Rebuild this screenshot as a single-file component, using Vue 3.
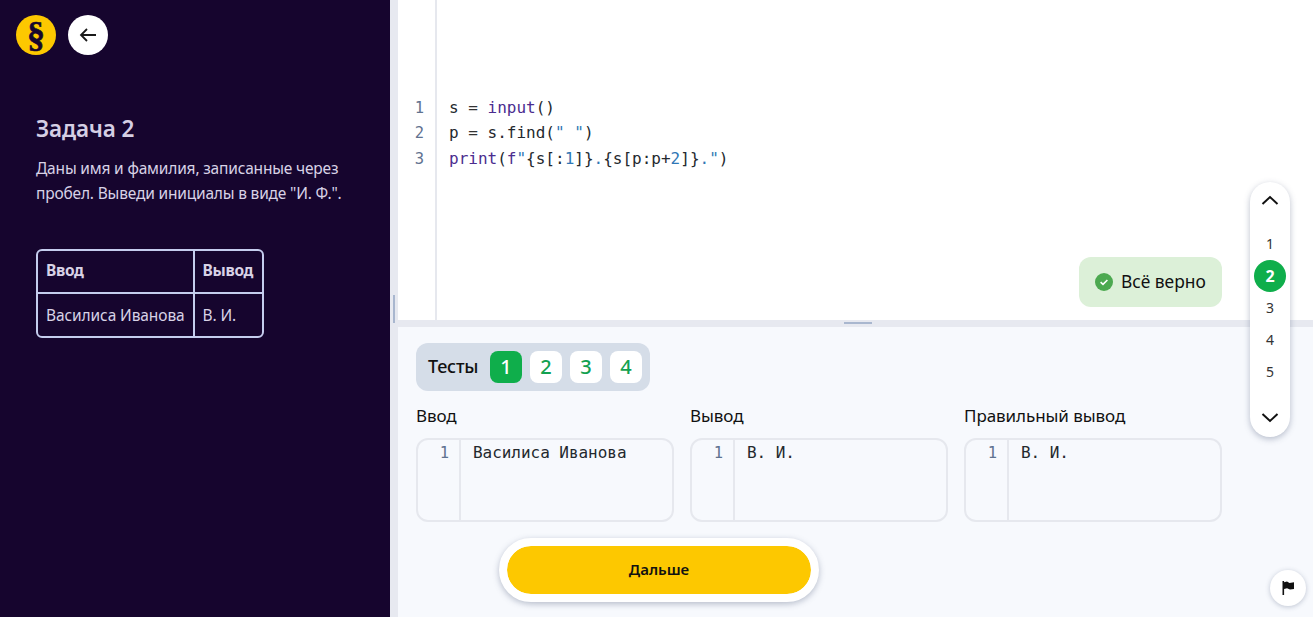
<script setup>
const inputs = [
  { title: 'Ввод', text: 'Василиса Иванова' },
  { title: 'Вывод', text: 'В. И.' },
  { title: 'Правильный вывод', text: 'В. И.' },
]
</script>

<template>
  <div class="page">
    <aside class="side">
      <div class="top">
        <div class="logo"><span>§</span></div>
        <button class="back" aria-label="Назад">
          <svg width="18" height="18" viewBox="0 0 18 18" fill="none" stroke="#1a1a1a" stroke-width="1.8"><path d="M17 9H2M8 3 2 9l6 6"/></svg>
        </button>
      </div>
      <h1>Задача 2</h1>
      <p>Даны имя и фамилия, записанные через пробел. Выведи инициалы в виде "И. Ф.".</p>
      <table>
        <thead><tr><th>Ввод</th><th>Вывод</th></tr></thead>
        <tbody><tr><td>Василиса Иванова</td><td>В. И.</td></tr></tbody>
      </table>
    </aside>

    <div class="vsplit"><i></i></div>

    <main class="main">
      <section class="editor">
        <div class="gutter"><div>1</div><div>2</div><div>3</div></div>
        <div class="code">
          <div class="line">s <b>=</b> <em>input</em>()</div>
          <div class="line">p <b>=</b> s.find(<u>" "</u>)</div>
          <div class="line"><em>print</em>(<em>f</em><u>"</u>{s[:<s>1</s>]}<u>.</u>{s[p:p+<s>2</s>]}<u>."</u>)</div>
        </div>
        <div class="toast">
          <svg width="18" height="18" viewBox="0 0 18 18"><circle cx="9" cy="9" r="9" fill="#4ca950"/><path d="M5.6 9.2 8 11.4l4.4-4.4" fill="none" stroke="#fff" stroke-width="1.6"/></svg>
          <span>Всё верно</span>
        </div>
      </section>

      <div class="hsplit"><i></i></div>

      <section class="bottom">
        <div class="tests">
          <span class="tests-label">Тесты</span>
          <span class="t on">1</span><span class="t">2</span><span class="t">3</span><span class="t">4</span>
        </div>
        <div class="cols">
          <div v-for="c in inputs" :key="c.title" class="col">
            <div class="col-title">{{ c.title }}</div>
            <div class="box">
              <div class="num">1</div>
              <div class="val">{{ c.text }}</div>
            </div>
          </div>
        </div>
        <div class="next-wrap"><button class="next">Дальше</button></div>
        <button class="flag" aria-label="Флаг">
          <svg width="16" height="16" viewBox="0 0 16 16"><path d="M2.5 1h1.6v14H2.5zM4.1 2.2 7 1.4l2.5 1.5 4.5-.6V9l-4 .6L7 8.2l-2.9.9z" fill="#111"/></svg>
        </button>
      </section>
    </main>

    <nav class="pager">
      <svg class="chev" width="18" height="10" viewBox="0 0 18 10" fill="none" stroke="#111" stroke-width="2"><path d="M1.5 9 9 2l7.5 7"/></svg>
      <div class="nums">
        <span>1</span><span class="cur">2</span><span>3</span><span>4</span><span>5</span>
      </div>
      <svg class="chev" width="18" height="10" viewBox="0 0 18 10" fill="none" stroke="#111" stroke-width="2"><path d="M1.5 1 9 8l7.5-7"/></svg>
    </nav>
  </div>
</template>

<style>
html, body { margin: 0; height: 100%; overflow: hidden; }
</style>

<style scoped>
.page {
  position: relative;
  display: flex;
  width: 1313px;
  height: 617px;
  overflow: hidden;
  font-family: "Noto Sans", "Open Sans", sans-serif;
  color: #111;
}
.side {
  width: 390px;
  flex: none;
  box-sizing: border-box;
  background: #16052e;
  padding: 15px 0 0 16px;
  color: #d8d2e6;
}
.top { display: flex; gap: 12px; }
.logo {
  width: 40px;
  height: 40px;
  border-radius: 50%;
  background: #fdc800;
  color: #16052e;
  display: flex;
  align-items: center;
  justify-content: center;
}
.logo span {
  display: block;
  font: 700 36px/36px "Liberation Serif", serif;
  -webkit-text-stroke: 0.6px #16052e;
}
.back {
  width: 40px;
  height: 40px;
  border: 0;
  border-radius: 50%;
  background: #fff;
  padding: 0;
  display: flex;
  align-items: center;
  justify-content: center;
}
h1 {
  margin: 59px 0 0 20px;
  font-size: 22.5px;
  line-height: 30px;
  font-weight: 600;
  color: #d5cfe4;
  letter-spacing: -0.1px;
}
p {
  margin: 11.6px 0 0 20px;
  width: 330px;
  font-size: 15.5px;
  line-height: 25px;
  letter-spacing: -0.18px;
}
table {
  margin: 43.4px 0 0 20px;
  border-collapse: separate;
  border-spacing: 0;
  border: 2px solid #c5cdee;
  border-radius: 6px;
  font-size: 15.5px;
  letter-spacing: -0.1px;
}
th, td {
  text-align: left;
  padding: 0 8px;
  white-space: nowrap;
}
th:last-child, td:last-child { padding-right: 9px; }
th {
  height: 39px;
  padding-bottom: 2px;
  font-weight: 700;
  letter-spacing: -0.3px;
  border-bottom: 2px solid #c5cdee;
}
td { height: 42px; }
th:first-child, td:first-child { border-right: 2px solid #c5cdee; }
.vsplit {
  width: 8px;
  flex: none;
  background: #e7e9f0;
  display: flex;
  align-items: flex-end;
  justify-content: center;
  padding-bottom: 294px;
  box-sizing: border-box;
}
.vsplit i { display: block; width: 2px; height: 28px; background: #a9b7cf; }
.main { flex: 1; min-width: 0; display: flex; flex-direction: column; }
.editor {
  position: relative;
  height: 320px;
  flex: none;
  display: flex;
  background: #fff;
  box-sizing: border-box;
}
.gutter {
  width: 39px;
  flex: none;
  box-sizing: border-box;
  padding: 96px 11px 0 0;
  border-right: 2px solid #e6e8ee;
  text-align: right;
  font: 15.5px/25.4px "DejaVu Sans Mono", monospace;
  color: #5f7290;
}
.code {
  padding: 95px 0 0 12px;
  font: 16px/25.4px "DejaVu Sans Mono", monospace;
  color: #24292e;
}
.line { white-space: pre; }
.code b { font-weight: 400; color: #333; }
.code em { font-style: normal; color: #4b2d8f; }
.code u { text-decoration: none; color: #2f77b5; }
.code s { text-decoration: none; color: #2f77b5; }
.toast {
  position: absolute;
  left: 681px;
  top: 257px;
  width: 143px;
  height: 50px;
  box-sizing: border-box;
  padding-left: 16px;
  display: flex;
  align-items: center;
  gap: 8px;
  background: #dcf0d8;
  border-radius: 12px;
  font-size: 17.4px;
}
.toast span { margin-top: -2px; }
.hsplit {
  height: 7px;
  flex: none;
  background: #e7e9f0;
  display: flex;
  justify-content: center;
}
.hsplit i { display: block; margin: 2px 0 0 4px; width: 28px; height: 2px; background: #a9b7cf; }
.bottom {
  position: relative;
  flex: 1;
  background: #f7f9fd;
  padding: 16px 18px 0;
}
.tests {
  display: inline-flex;
  align-items: center;
  gap: 8px;
  height: 48px;
  box-sizing: border-box;
  padding: 0 8px 0 12px;
  background: #d5dde8;
  border-radius: 12px;
}
.tests-label { font-size: 18px; margin: -2px 4px 0 0; letter-spacing: -0.2px; font-weight: 500; width: 50px; }
.t {
  width: 32px;
  height: 32px;
  border-radius: 8px;
  background: #fff;
  color: #12a150;
  font-size: 20px;
  font-weight: 500;
  padding-bottom: 2px;
  box-sizing: border-box;
  display: flex;
  align-items: center;
  justify-content: center;
}
.t.on { background: #0fae4b; color: #fff; }
.cols {
  display: grid;
  grid-template-columns: repeat(3, 258px);
  gap: 16px;
  margin-top: 14px;
}
.col-title { font-size: 17px; line-height: 22px; margin-bottom: 11px; letter-spacing: -0.07px; }
.box {
  height: 84px;
  box-sizing: border-box;
  border: 2px solid #e6e8ee;
  border-radius: 12px;
  display: flex;
  font: 16px/25px "DejaVu Sans Mono", monospace;
}
.num {
  width: 43px;
  flex: none;
  box-sizing: border-box;
  border-right: 2px solid #e6e8ee;
  text-align: right;
  padding: 1px 10px 0 0;
  font-size: 15.5px;
  color: #5f7290;
}
.val { padding-left: 12px; color: #24292e; letter-spacing: -0.04px; }
.next-wrap { margin: 16px 0 0 83px; }
.next {
  display: block;
  width: 320px;
  height: 64px;
  box-sizing: border-box;
  border: 8px solid #fff;
  border-radius: 32px;
  background: #fdc800;
  background-clip: padding-box;
  box-shadow: 0 2px 6px rgba(60, 75, 110, 0.35);
  font: 600 15px "Noto Sans", sans-serif;
  color: #111;
  padding: 0 0 2px;
}
.flag {
  position: absolute;
  right: 7px;
  bottom: 11px;
  width: 36px;
  height: 36px;
  border: 0;
  border-radius: 50%;
  background: #fff;
  box-shadow: 0 1px 5px rgba(60, 75, 110, 0.3);
  padding: 0;
  display: flex;
  align-items: center;
  justify-content: center;
}
.pager {
  position: absolute;
  left: 1250px;
  top: 182px;
  width: 40px;
  height: 255px;
  box-sizing: border-box;
  background: #fff;
  border-radius: 20px;
  box-shadow: 0 2px 6px rgba(60, 75, 110, 0.35);
  display: flex;
  flex-direction: column;
  align-items: center;
  padding-top: 13px;
}
.nums {
  margin: 22px 0 26px;
  display: flex;
  flex-direction: column;
  align-items: center;
  font-size: 14px;
  color: #333;
}
.nums span { height: 32px; width: 32px; display: flex; align-items: center; justify-content: center; border-radius: 50%; }
.nums .cur { background: #0fae4b; color: #fff; font-weight: 700; font-size: 16px; margin: 1px 0 -1px; }
</style>
